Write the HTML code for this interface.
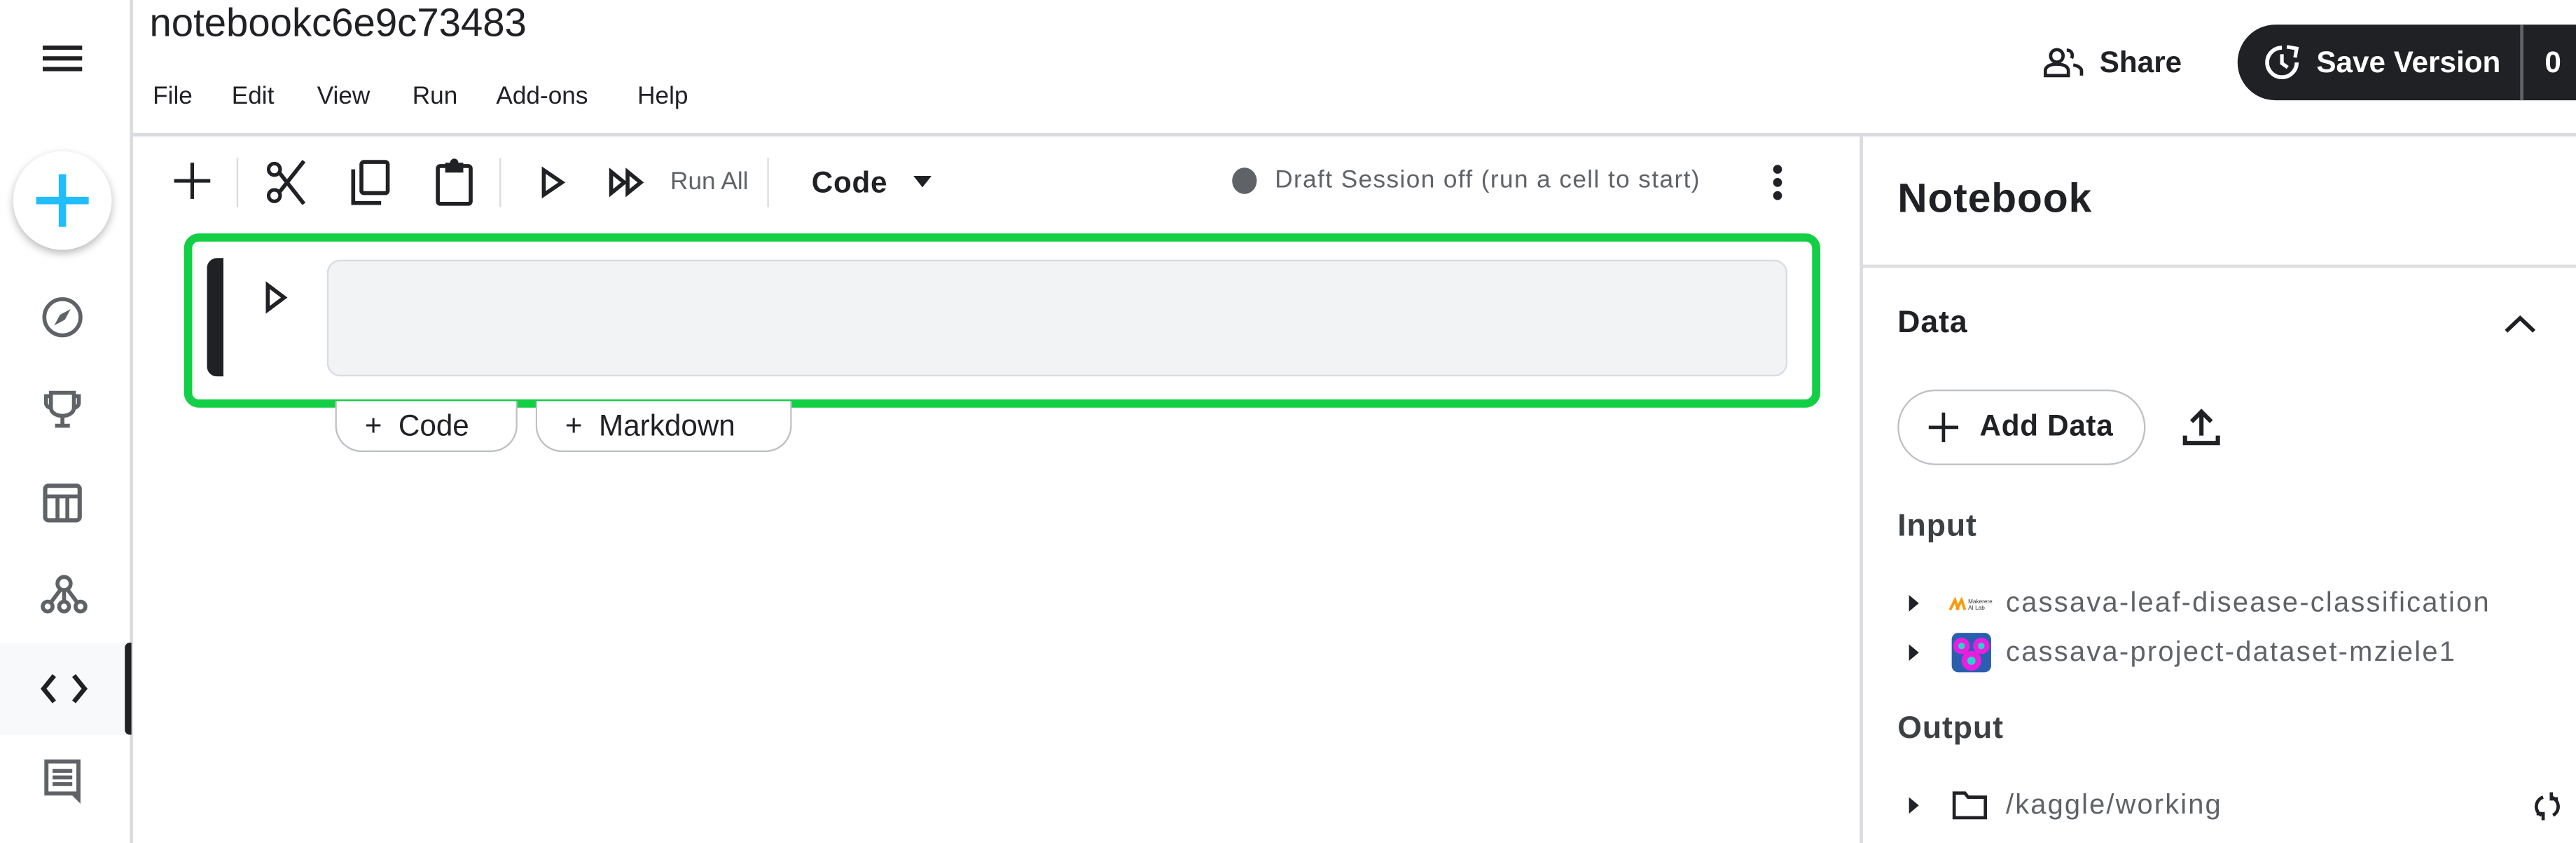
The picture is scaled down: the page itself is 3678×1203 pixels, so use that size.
<!DOCTYPE html>
<html><head><meta charset="utf-8"><style>
html,body{margin:0;padding:0;background:#fff;overflow:hidden}
body{width:3678px;height:1203px;position:relative}
#w{position:absolute;left:0;top:0;width:1568px;height:513px;transform:scale(2.34566);transform-origin:0 0;font-family:"Liberation Sans",sans-serif;color:#202124}
.a{position:absolute}
svg{position:absolute;overflow:visible}
.t{position:absolute;white-space:nowrap;line-height:1}
</style></head><body><div id="w">
<div class="a" style="left:79px;top:0;width:2px;height:513px;background:#dadce0"></div>
<svg style="left:26px;top:27px" width="24" height="18"><path d="M0 2H24M0 8.5H24M0 15H24" stroke="#202124" stroke-width="2.6"/></svg>
<div class="a" style="left:8px;top:92px;width:60px;height:60px;border-radius:50%;background:#fff;box-shadow:0 2px 5px rgba(0,0,0,.28)"></div>
<svg style="left:22px;top:106px" width="32" height="32"><path d="M16 0V32M0 16H32" stroke="#20beff" stroke-width="4.5"/></svg>
<svg style="left:25px;top:180px" width="26" height="26" viewBox="0 0 26 26"><circle cx="13" cy="13" r="11" fill="none" stroke="#5f6368" stroke-width="2.4"/><path d="M18 8L14.5 14.5L8 18L11.5 11.5Z" fill="#5f6368"/></svg>
<svg style="left:25px;top:236px" width="26" height="26" viewBox="0 0 26 26"><path d="M6 3H20V12C20 15 17 17 13 17C9 17 6 15 6 12ZM6 5H3V9C3 11 4.5 12 6 12M20 5H23V9C23 11 21.5 12 20 12M13 17V23M8.5 23H17.5" fill="none" stroke="#5f6368" stroke-width="2.4"/></svg>
<svg style="left:26px;top:294px" width="24" height="24" viewBox="0 0 24 24"><rect x="1.5" y="1.5" width="21" height="21" rx="2" fill="none" stroke="#5f6368" stroke-width="2.6"/><path d="M1.5 8H22.5M9 8V22M15 8V22" stroke="#5f6368" stroke-width="2.4"/></svg>
<svg style="left:24px;top:349px" width="30" height="26" viewBox="0 0 30 26"><circle cx="15" cy="6" r="4" fill="none" stroke="#5f6368" stroke-width="2.4"/><circle cx="5" cy="20" r="3" fill="none" stroke="#5f6368" stroke-width="2.4"/><circle cx="15" cy="20" r="3" fill="none" stroke="#5f6368" stroke-width="2.4"/><circle cx="25" cy="20" r="3" fill="none" stroke="#5f6368" stroke-width="2.4"/><path d="M15 10V17M13 9.5L7 17.5M17 9.5L23 17.5" stroke="#5f6368" stroke-width="2.4"/></svg>
<div class="a" style="left:0;top:391px;width:79px;height:56px;background:#f8f9fa"></div>
<div class="a" style="left:76px;top:391px;width:4px;height:56px;background:#202124;border-radius:3px 0 0 3px"></div>
<svg style="left:25px;top:410px" width="28" height="18" viewBox="0 0 28 18"><path d="M8 1L1.5 9L8 17M20 1L26.5 9L20 17" fill="none" stroke="#202124" stroke-width="2.8"/></svg>
<svg style="left:25px;top:461px" width="26" height="28" viewBox="0 0 26 28"><path d="M2 1H24V28L19 23H2Z" fill="#5f6368"/><rect x="4.5" y="3.5" width="17" height="17" fill="#fff"/><path d="M7 8H19M7 12H19M7 16H19" stroke="#5f6368" stroke-width="2.4"/></svg>

<div class="t" style="left:91px;top:3px;font-size:24px;color:#202124">notebookc6e9c73483</div>
<div class="t" style="left:93px;top:51px;font-size:15px">File</div>
<div class="t" style="left:141px;top:51px;font-size:15px">Edit</div>
<div class="t" style="left:193px;top:51px;font-size:15px">View</div>
<div class="t" style="left:251px;top:51px;font-size:15px">Run</div>
<div class="t" style="left:302px;top:51px;font-size:15px">Add-ons</div>
<div class="t" style="left:388px;top:51px;font-size:15px">Help</div>
<div class="a" style="left:81px;top:81px;width:1487px;height:2px;background:#dadce0"></div>

<svg style="left:1244px;top:29px" width="24" height="18" viewBox="0 0 24 18"><circle cx="8" cy="5" r="3.8" fill="none" stroke="#202124" stroke-width="2"/><path d="M1 17V14C1 11.5 4 10 8 10C12 10 15 11.5 15 14V17ZM14 1.5C17 1.5 18 4 17 6.5M18 10.5C21 11 23 12.5 23 14V17" fill="none" stroke="#202124" stroke-width="2"/></svg>
<div class="t" style="left:1278px;top:29px;font-size:18px;font-weight:bold">Share</div>
<div class="a" style="left:1362px;top:15px;width:240px;height:46px;background:#202124;border-radius:23px"></div>
<div class="a" style="left:1534px;top:15px;width:2px;height:46px;background:#5f6368"></div>
<svg style="left:1378px;top:27px" width="22" height="22" viewBox="0 0 22 22"><path d="M11 2A9 9 0 1 0 20 11" fill="none" stroke="#fff" stroke-width="2.4"/><path d="M11 6V11.5L14.5 14" fill="none" stroke="#fff" stroke-width="2.2"/><path d="M14 1.5L20 2.5L19 8" fill="none" stroke="#fff" stroke-width="2.2"/></svg>
<div class="t" style="left:1410px;top:29px;font-size:18px;font-weight:bold;color:#fff">Save Version</div>
<div class="t" style="left:1549px;top:29px;font-size:18px;font-weight:bold;color:#fff">0</div>

<svg style="left:106px;top:99px" width="22" height="22"><path d="M11 0V22M0 11H22" stroke="#202124" stroke-width="2.2"/></svg>
<div class="a" style="left:144px;top:96px;width:1px;height:30px;background:#dadce0"></div>
<svg style="left:162px;top:97px" width="26" height="28" viewBox="0 0 26 28"><circle cx="5" cy="6" r="3.5" fill="none" stroke="#202124" stroke-width="2.2"/><circle cx="5" cy="22" r="3.5" fill="none" stroke="#202124" stroke-width="2.2"/><path d="M8 8L23 27M8 20L23 1" stroke="#202124" stroke-width="2.4"/></svg>
<svg style="left:213px;top:97px" width="26" height="28" viewBox="0 0 26 28"><rect x="7" y="1.5" width="16" height="19" rx="1.5" fill="none" stroke="#202124" stroke-width="2.4"/><path d="M2 6V26.5H19" fill="none" stroke="#202124" stroke-width="2.4"/></svg>
<svg style="left:264px;top:96px" width="26" height="30" viewBox="0 0 26 30"><rect x="2.5" y="5" width="20" height="23" rx="1.5" fill="none" stroke="#202124" stroke-width="2.4"/><rect x="7" y="3" width="11" height="6" fill="#202124"/><circle cx="12.5" cy="3" r="2.5" fill="#202124"/></svg>
<div class="a" style="left:304px;top:96px;width:1px;height:30px;background:#dadce0"></div>
<svg style="left:329px;top:102px" width="16" height="18" viewBox="0 0 16 18"><path d="M2 1.5L13 9L2 16.5Z" fill="none" stroke="#202124" stroke-width="2.4"/></svg>
<svg style="left:370px;top:103px" width="24" height="16" viewBox="0 0 24 16"><path d="M2 1.5L10 8L2 14.5ZM12 1.5L20 8L12 14.5Z" fill="none" stroke="#202124" stroke-width="2.4"/></svg>
<div class="t" style="left:408px;top:103px;font-size:15px;color:#5f6368">Run All</div>
<div class="a" style="left:467px;top:96px;width:1px;height:30px;background:#dadce0"></div>
<div class="t" style="left:494px;top:102px;font-size:18px;font-weight:bold;letter-spacing:0.3px">Code</div>
<svg style="left:556px;top:107px" width="11" height="7"><path d="M0 0H11L5.5 7Z" fill="#202124"/></svg>
<div class="a" style="left:750px;top:102px;width:15px;height:16px;border-radius:50%;background:#5f6368"></div>
<div class="t" style="left:776px;top:102px;font-size:15px;color:#5f6368;letter-spacing:0.6px">Draft Session off (run a cell to start)</div>
<svg style="left:1078px;top:99px" width="8" height="24"><circle cx="4" cy="4" r="2.7" fill="#202124"/><circle cx="4" cy="12" r="2.7" fill="#202124"/><circle cx="4" cy="20" r="2.7" fill="#202124"/></svg>

<div class="a" style="left:112px;top:142px;width:986px;height:96px;border:5px solid #12cf45;border-radius:9px"></div>
<div class="a" style="left:126px;top:157px;width:10px;height:72px;background:#202124;border-radius:6px 0 0 6px"></div>
<svg style="left:161px;top:172px" width="14" height="18" viewBox="0 0 14 18"><path d="M2 1.5L12 9L2 16.5Z" fill="none" stroke="#202124" stroke-width="2.4"/></svg>
<div class="a" style="left:199px;top:158px;width:887px;height:69px;background:#f1f3f4;border:1px solid #dadce0;border-radius:8px"></div>
<div class="a" style="left:204px;top:244px;width:109px;height:30px;border:1px solid #bdc1c6;border-top:none;border-radius:0 0 16px 16px;background:#fff"></div>
<div class="t" style="left:222px;top:250px;font-size:18px">+&nbsp; Code</div>
<div class="a" style="left:326px;top:244px;width:154px;height:30px;border:1px solid #bdc1c6;border-top:none;border-radius:0 0 16px 16px;background:#fff"></div>
<div class="t" style="left:344px;top:250px;font-size:18px">+&nbsp; Markdown</div>

<div class="a" style="left:1132px;top:83px;width:2px;height:430px;background:#dadce0"></div>
<div class="t" style="left:1155px;top:109px;font-size:25px;font-weight:bold;letter-spacing:0.4px">Notebook</div>
<div class="a" style="left:1134px;top:161px;width:434px;height:2px;background:#e0e0e0"></div>
<div class="t" style="left:1155px;top:187px;font-size:19px;font-weight:bold;letter-spacing:0.4px">Data</div>
<svg style="left:1524px;top:191px" width="20" height="12"><path d="M1.5 10.5L10 2.5L18.5 10.5" fill="none" stroke="#202124" stroke-width="2.4"/></svg>
<div class="a" style="left:1155px;top:237px;width:149px;height:44px;border:1px solid #bdc1c6;border-radius:23px"></div>
<svg style="left:1174px;top:251px" width="18" height="18"><path d="M9 0V18M0 9H18" stroke="#202124" stroke-width="2"/></svg>
<div class="t" style="left:1205px;top:250px;font-size:18px;font-weight:bold;letter-spacing:0.3px">Add Data</div>
<svg style="left:1328px;top:248px" width="24" height="24" viewBox="0 0 24 24"><path d="M12 17V3M6 8.5L12 2.5L18 8.5M2 17V21.5H22V17" fill="none" stroke="#202124" stroke-width="2.6"/></svg>
<div class="t" style="left:1155px;top:311px;font-size:19px;font-weight:bold;color:#3c4043;letter-spacing:0.4px">Input</div>
<svg style="left:1162px;top:362px" width="6" height="10"><path d="M0 0L6 5L0 10Z" fill="#202124"/></svg>
<svg style="left:1187px;top:362px" width="26" height="10" viewBox="0 0 26 10"><path d="M0 9L3 3L5 9M4 9L7 3L9 9" stroke="#ff9800" stroke-width="1.6" fill="none"/><text x="11" y="5" font-size="3.5" fill="#333" font-family="Liberation Sans">Makerere</text><text x="11" y="9" font-size="3.5" fill="#333" font-family="Liberation Sans">AI Lab</text></svg>
<div class="t" style="left:1221px;top:358px;font-size:17px;color:#5f6368;letter-spacing:0.95px">cassava-leaf-disease-classification</div>
<svg style="left:1162px;top:392px" width="6" height="10"><path d="M0 0L6 5L0 10Z" fill="#202124"/></svg>
<svg style="left:1188px;top:385px" width="24" height="24" viewBox="0 0 24 24"><rect width="24" height="24" rx="4" fill="#2a5fb0"/><circle cx="6" cy="8" r="5" fill="#e91ee0"/><circle cx="18" cy="8" r="5" fill="#e91ee0"/><circle cx="12" cy="17" r="6" fill="#e91ee0"/><circle cx="6" cy="8" r="2" fill="#2ad4c8"/><circle cx="18" cy="8" r="2" fill="#2ad4c8"/><circle cx="12" cy="17" r="2.5" fill="#2ad4c8"/></svg>
<div class="t" style="left:1221px;top:388px;font-size:17px;color:#5f6368;letter-spacing:0.95px">cassava-project-dataset-mziele1</div>
<div class="t" style="left:1155px;top:434px;font-size:19px;font-weight:bold;color:#3c4043;letter-spacing:0.4px">Output</div>
<svg style="left:1162px;top:485px" width="6" height="10"><path d="M0 0L6 5L0 10Z" fill="#202124"/></svg>
<svg style="left:1188px;top:481px" width="22" height="18" viewBox="0 0 22 18"><path d="M1.5 1.5H8L10 4H20.5V16.5H1.5Z" fill="none" stroke="#202124" stroke-width="2"/></svg>
<div class="t" style="left:1221px;top:481px;font-size:17px;color:#5f6368;letter-spacing:0.9px">/kaggle/working</div>
<svg style="left:1542px;top:482px" width="17" height="17" viewBox="0 0 17 17"><path d="M6 3A6 6 0 0 0 5 14M11 3A6 6 0 0 1 12 14M2 13H6V17M15 4H11V0" fill="none" stroke="#202124" stroke-width="2"/></svg>
</div></body></html>
